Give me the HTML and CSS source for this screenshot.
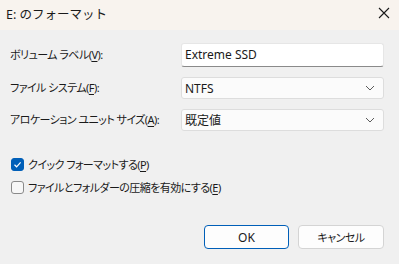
FILE: index.html
```html
<!DOCTYPE html>
<html lang="ja">
<head>
<meta charset="utf-8">
<link rel="stylesheet" href="styles.css">
</head>
<body>
<div class="window">
  <div class="titlebar">
    <span class="title">E: のフォーマット</span>
    <span class="close">
      <svg width="12" height="12" viewBox="0 0 12 12"><path d="M1 1 L11 11 M11 1 L1 11" stroke="#1a1a1a" stroke-width="1.1" fill="none"/></svg>
    </span>
  </div>
  <div class="content">
    <div class="form">
      <label class="label jp">ボリューム ラベル(<u>V</u>):</label>
      <div class="input">Extreme SSD</div>
      <label class="label jp">ファイル システム(<u>F</u>):</label>
      <div class="select"><span>NTFS</span><svg class="chev" width="10" height="6" viewBox="0 0 10 6"><path d="M1 1 L5 5 L9 1" stroke="#5c5c5c" stroke-width="1" fill="none"/></svg></div>
      <label class="label jp">アロケーション ユニット サイズ(<u>A</u>):</label>
      <div class="select"><span class="jp val">既定値</span><svg class="chev" width="10" height="6" viewBox="0 0 10 6"><path d="M1 1 L5 5 L9 1" stroke="#5c5c5c" stroke-width="1" fill="none"/></svg></div>
    </div>
    <div class="checks">
      <div class="check">
        <span class="box checked"><svg width="9" height="9" viewBox="0 0 9 9"><path d="M1.5 4.8 L3.6 6.8 L7.6 2.4" stroke="#fff" stroke-width="1.2" fill="none"/></svg></span>
        <span class="jp">クイック フォーマットする(<u>P</u>)</span>
      </div>
      <div class="check">
        <span class="box"></span>
        <span class="jp">ファイルとフォルダーの圧縮を有効にする(<u>E</u>)</span>
      </div>
    </div>
    <div class="buttons">
      <button class="btn primary">OK</button>
      <button class="btn"><span class="jp">キャンセル</span></button>
    </div>
  </div>
</div>
</body>
</html>
```
FILE: styles.css
```css
* { box-sizing: border-box; }
html, body { margin: 0; padding: 0; }
body {
  width: 399px;
  height: 264px;
  overflow: hidden;
  font-family: "Noto Sans", "Noto Sans CJK JP", sans-serif;
  font-size: 12px;
  color: #1a1a1a;
  background: #f0f0f0;
}
.jp {
  font-size: 11px;
  font-feature-settings: "palt";
  letter-spacing: -0.55px;
}
.val { font-size: 12px; letter-spacing: 0; }
.window { width: 399px; height: 264px; display: flex; flex-direction: column; }
.titlebar {
  height: 30px;
  background: #f8f3ee;
  display: flex;
  align-items: center;
  justify-content: space-between;
  padding: 0 10px 4px 6px;
}
.title { font-size: 12.5px; white-space: nowrap; }
.close { display: flex; margin-right: -1px; }
.content { flex: 1; padding: 13px 15px 0 10px; }
.form {
  display: grid;
  grid-template-columns: 171px 203px;
  row-gap: 10px;
  align-items: center;
}
.label { line-height: 16px; white-space: nowrap; }
u { text-decoration: underline; text-underline-offset: 2px; }
.input {
  height: 24px;
  background: #ffffff;
  border: 1px solid #e6e6e6;
  border-bottom: 1px solid #8a8a8a;
  border-radius: 3px;
  padding: 0 3px;
  line-height: 21px;
}
.select {
  height: 22px;
  background: #fbfbfb;
  border: 1px solid #dddddd;
  border-radius: 3px;
  padding: 0 8px 0 3px;
  display: flex;
  align-items: center;
  justify-content: space-between;
}
.chev { display: block; }
.checks {
  margin-top: 26px;
  display: flex;
  flex-direction: column;
  gap: 9px;
  padding-left: 1px;
}
.check { display: flex; align-items: center; gap: 4px; height: 14px; white-space: nowrap; }
.box {
  width: 13px; height: 13px;
  border: 1px solid #8a8a8a;
  border-radius: 3px;
  background: #f7f7f7;
  display: flex;
  align-items: center;
  justify-content: center;
}
.box.checked { background: #005fb8; border-color: #005fb8; }
.box svg { display: block; }
.buttons {
  margin-top: 31px;
  display: flex;
  justify-content: flex-end;
  gap: 9px;
}
.btn {
  width: 86px;
  height: 24px;
  font-family: "Noto Sans", "Noto Sans CJK JP", sans-serif;
  font-size: 12px;
  color: #1a1a1a;
  background: #fdfdfd;
  border: 1px solid #d4d4d4;
  border-radius: 4px;
  padding: 0;
}
.btn.primary { width: 85px; border: 1px solid #005fb8; }
```
